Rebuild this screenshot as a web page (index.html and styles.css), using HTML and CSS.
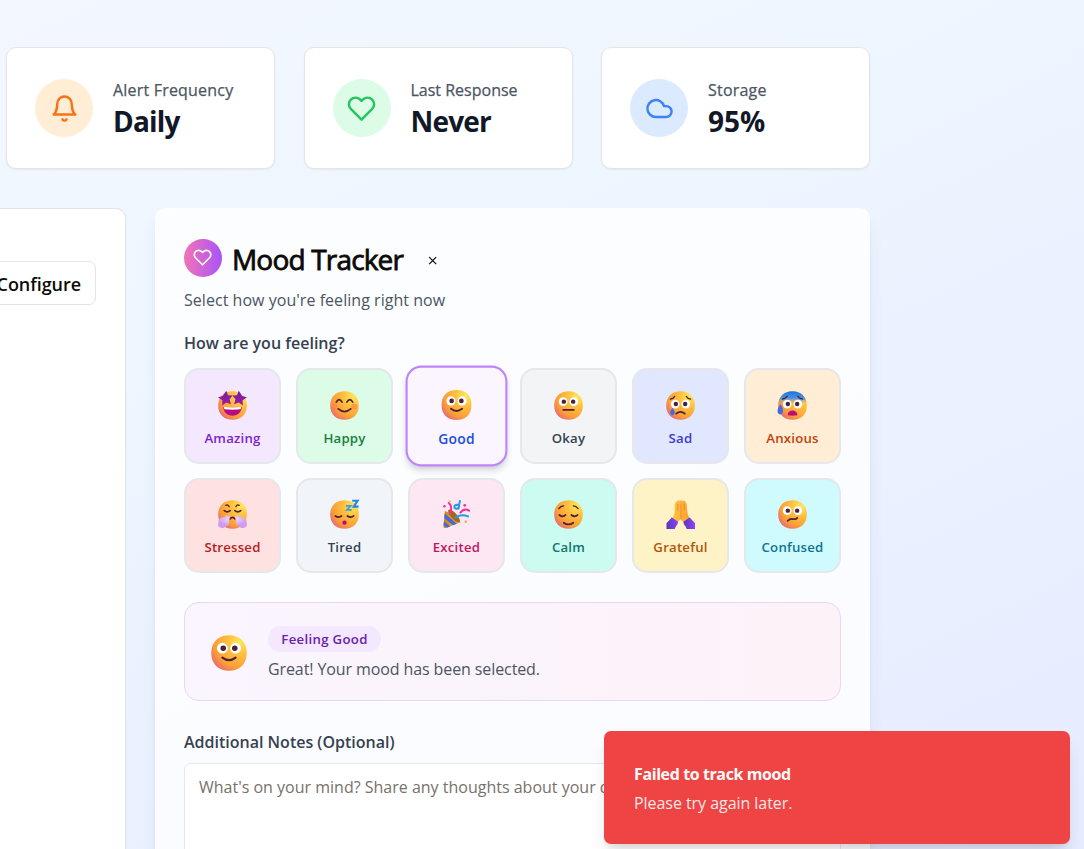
FILE: index.html
```html
<!DOCTYPE html>
<html lang="en">
<head>
<meta charset="utf-8">
<title>Mood Tracker</title>
<link rel="stylesheet" href="styles.css">
</head>
<body>
<svg class="defs" width="0" height="0" aria-hidden="true">
  <defs>
    <radialGradient id="skin" cx="24" cy="6" r="28" gradientUnits="userSpaceOnUse">
      <stop offset="0" stop-color="#ffe75c"/><stop offset=".35" stop-color="#ffc23f"/><stop offset=".75" stop-color="#fc9f36"/><stop offset="1" stop-color="#e76d6c"/>
    </radialGradient>
    <linearGradient id="star" x2="0" y2="1"><stop stop-color="#6924ad"/><stop offset="1" stop-color="#a6169f"/></linearGradient>
    <linearGradient id="fear" x2="0" y2="1"><stop stop-color="#1673e0"/><stop offset=".55" stop-color="#4d90e6"/><stop offset="1" stop-color="#c5b4a0" stop-opacity="0"/></linearGradient>
    <radialGradient id="steam" cx=".5" cy=".3"><stop stop-color="#f4e5ff"/><stop offset="1" stop-color="#cf9cf0"/></radialGradient>
    <linearGradient id="sleeve"><stop stop-color="#5b36b8"/><stop offset="1" stop-color="#8a43fa"/></linearGradient>
    <linearGradient id="hand"><stop stop-color="#ffc93f"/><stop offset="1" stop-color="#fc9c34"/></linearGradient>
    <linearGradient id="cone"><stop stop-color="#c98122"/><stop offset="1" stop-color="#f0b43b"/></linearGradient>
    <symbol id="face" viewBox="0 0 30 30"><path d="M15 .2C24 .2 29.800 6 29.800 15S24 29.800 15 29.800 .2 24 .2 15 6 .2 15 .2Z" fill="url(#skin)"/></symbol>
    <symbol id="eyes" viewBox="0 0 30 30"><circle cx="9.500" cy="11" r="4.500" fill="#fff"/><circle cx="20.500" cy="11" r="4.500" fill="#fff"/><circle cx="10.200" cy="11" r="2.300" fill="#4b2038"/><circle cx="19.800" cy="11" r="2.300" fill="#4b2038"/></symbol>
    <symbol id="good" viewBox="0 0 30 30"><use href="#face"/><use href="#eyes"/><path class="ink" d="M9.500 18.800q5.500 4.200 11 0"/></symbol>
    <symbol id="heart" viewBox="0 0 24 24"><path d="M20.840 4.610a5.500 5.500 0 0 0-7.780 0L12 5.670l-1.060-1.060a5.500 5.500 0 0 0-7.780 7.780L12 21.230l8.840-8.840a5.500 5.500 0 0 0 0-7.780Z"/></symbol>
  </defs>
</svg>
<main class="page">
  <section class="stats">
    <article class="stat">
      <span class="stat-icon orange"><svg viewBox="0 0 24 24"><path d="M6 8a6 6 0 0 1 12 0c0 7 3 9 3 9H3s3-2 3-9M10.300 21a1.940 1.940 0 0 0 3.400 0"/></svg></span>
      <div><p class="stat-label spaced">Alert Frequency</p><p class="stat-value">Daily</p></div>
    </article>
    <article class="stat">
      <span class="stat-icon green"><svg viewBox="0 0 24 24"><use href="#heart"/></svg></span>
      <div><p class="stat-label">Last Response</p><p class="stat-value">Never</p></div>
    </article>
    <article class="stat">
      <span class="stat-icon blue"><svg viewBox="0 0 24 24"><path d="M17.500 19H9a7 7 0 1 1 6.710-9h1.790a4.500 4.500 0 1 1 0 9Z"/></svg></span>
      <div><p class="stat-label spaced">Storage</p><p class="stat-value percent">95%</p></div>
    </article>
  </section>
  <section class="columns">
    <aside class="side"><button class="configure">Configure</button></aside>
    <article class="tracker">
      <header class="head">
        <span class="head-icon"><svg viewBox="0 0 24 24"><use href="#heart"/></svg></span>
        <h2 class="title">Mood Tracker</h2>
        <button class="close" aria-label="Close"><svg viewBox="0 0 10 10"><path d="M1.200 1.200l7 7M8.200 1.200l-7 7"/></svg></button>
      </header>
      <p class="subtitle">Select how you're feeling right now</p>
      <h3 class="field-label question">How are you feeling?</h3>
      <div class="moods">
        <button class="mood amazing"><svg viewBox="0 0 30 30"><use href="#face"/><path d="M5.500 16.500q9.500 1.500 19 0c0 5.500-4 9-9.500 9s-9.500-3.500-9.500-9Z" fill="#b80a84"/><path d="M6 16.400q9 1.500 18 0l-.6 2.600q-8.400 1-16.800 0Z" fill="#fff"/><path d="M8.500 -.2l1.900 4.500 4.800.3-3.300 4 1.500 5.200-4.800-2-4.200 3.200 .1-5.500L0 6.500l5-1.400Z" fill="url(#star)"/><path d="M21.500 -.2l-1.900 4.500-4.800.3 3.300 4-1.500 5.200 4.800-2 4.200 3.200-.1-5.500 4.500-3-5-1.400Z" fill="url(#star)"/></svg><span>Amazing</span></button>
        <button class="mood happy"><svg viewBox="0 0 30 30"><use href="#face"/><circle cx="5" cy="16" r="3" fill="#ff7858" opacity=".45"/><circle cx="25" cy="16" r="3" fill="#ff7858" opacity=".6"/><path class="ink" d="M6.500 11.500q3-5 6 0M17.500 11.500q3-5 6 0M8.500 18.500q6.500 5.500 13 0"/></svg><span>Happy</span></button>
        <button class="mood good selected"><svg viewBox="0 0 30 30"><use href="#good"/></svg><span>Good</span></button>
        <button class="mood okay"><svg viewBox="0 0 30 30"><use href="#face"/><use href="#eyes"/><path class="ink" d="M9.500 19.500h11"/></svg><span>Okay</span></button>
        <button class="mood sad"><svg viewBox="0 0 30 30"><use href="#face"/><g transform="translate(0 2.500)"><use href="#eyes" width="30" height="30"/></g><path class="ink thin" d="M4.500 8.500q3-.5 4.500-3M21 5.500q1.500 2.500 4.500 3"/><path class="ink" d="M10.500 23.500q4.500-4 9 0"/><path d="M6.700 17.500c1.700 2 2.300 3.200 2.300 4.800 0 3.600-4.600 3.600-4.600 0 0-1.600.6-2.800 2.300-4.800Z" fill="#3f6de0"/></svg><span>Sad</span></button>
        <button class="mood anxious"><svg viewBox="0 0 30 30"><use href="#face"/><path d="M15 .2C23.500 .2 29 5.500 29.700 13.500H.3C1 5.500 6.500 .2 15 .2Z" fill="url(#fear)"/><g transform="translate(0 2.500)"><use href="#eyes" width="30" height="30"/></g><path class="ink thin" d="M4.500 8.500q3-.5 5-3M20.500 5.500q2 2.500 5 3"/><path d="M10 25c0-6.500 10-6.500 10 0q-5 1-10 0Z" fill="#bd0c74"/><path d="M2.500 14c2 2 2.600 4.600 2.600 6.500 0 5-5.600 5-5.600.3 0-2.300 1-4.300 3-6.800Z" fill="#3f6de0"/></svg><span>Anxious</span></button>
        <button class="mood stressed"><svg viewBox="0 0 30 30"><use href="#face"/><path class="ink thin" d="M8 5.500q2.500-1.200 3.500 1.500M22 5.500q-2.500-1.200-3.500 1.500"/><path class="ink" d="M6.500 11q3 2.500 6 0M17.500 11q3 2.500 6 0M12.500 19.500q2.500-3 5 0"/><path d="M12 16.500c1 2-1 4-1 5.500 1.500 3-1 5-3 5.500-2 2.500-5 1.500-5.500 1-2.500-.5-3-3-2-5-.5-5 4-6 6-5.500 1-2 3.500-2.500 5.500-1.500ZM18 16.500c-1 2 1 4 1 5.500-1.500 3 1 5 3 5.500 2 2.500 5 1.500 5.500 1 2.500-.5 3-3 2-5 .5-5-4-6-6-5.500-1-2-3.500-2.500-5.500-1.500Z" fill="url(#steam)"/></svg><span>Stressed</span></button>
        <button class="mood tired"><svg viewBox="0 0 30 30"><use href="#face"/><path class="ink" d="M5.500 16.500q3.500 2.500 6.500 0M18 16.500q3.500 2.500 6.500 0"/><circle cx="15" cy="23.500" r="2.200" fill="#ba0879"/><path d="M23 .8h5.500l-4 6h5" fill="none" stroke="#2386e8" stroke-width="2.200"/><path d="M16.500 6h5l-4 4.200h5" fill="none" stroke="#36a3e0" stroke-width="1.800"/></svg><span>Tired</span></button>
        <button class="mood excited"><svg viewBox="0 0 30 30"><path d="M3 11.500L1.500 27q-.3 2.500 2 2l16-6Q14 15 3 11.500Z" fill="url(#cone)"/><path d="M2.800 14l-.4 4.500 9 7.500 4-1.500ZM2 22l-.3 4 3.500 2.700 3.300-1.200Z" fill="#4268dc"/><ellipse cx="12.500" cy="16.500" rx="3" ry="8.500" transform="rotate(-42 12.500 16.500)" fill="#a7661f"/><g fill="none" stroke-width="2" stroke-linecap="round"><path d="M7 3q4 3 1.500 11M19 13q4-5 9-2" stroke="#f23091"/><path d="M16 5q-4 0-3 3 2 2 4 0 2-2-1-3M17 9l1.500-8M14 18q6-4 13-1" stroke="#239ce4"/></g><circle cx="2.500" cy="6.500" r="1.300" fill="#f23091"/><circle cx="23.500" cy="5.500" r="1.400" fill="#f23091"/><circle cx="24.500" cy="22.500" r="1.200" fill="#e89d37"/><circle cx="8" cy="1.500" r="1" fill="#efb63b"/></svg><span>Excited</span></button>
        <button class="mood calm"><svg viewBox="0 0 30 30"><use href="#face"/><path class="ink thin" d="M5 9q2-3 5-3M20 6q3 0 5 3"/><path class="ink" d="M5.500 15.500q3.500 2.800 6.500 0M18 15.500q3.500 2.800 6.500 0M10 23.500q5 3.500 10 0"/></svg><span>Calm</span></button>
        <button class="mood grateful"><svg viewBox="0 0 30 30"><path d="M14 .5h3c3 0 4 2 4.500 5L22 12c.5 4 2 6.500 4 9l-5 4.500-6-5.500-6 5.500L4.500 21C7.500 18 9 15 9 11V5c.3-2.500 2-4.500 5-4.500Z" fill="url(#hand)"/><path d="M15.500 4v16M12.200 4v7M18.800 4v7" stroke="#e78132" stroke-width=".8"/><path d="M.5 24L6 18l6.500 4.500c0 3-2.500 4.500-3.500 7.500H.5Z" fill="url(#sleeve)"/><path d="M30 24l-5.500-6L18 22.500c0 3 2.500 4.500 3.500 7.500H30Z" fill="url(#sleeve)"/></svg><span>Grateful</span></button>
        <button class="mood confused"><svg viewBox="0 0 30 30"><use href="#face"/><use href="#eyes"/><path class="ink" d="M10 21.500q2.500-2.500 5.500-1.800t4.500-1.200"/></svg><span>Confused</span></button>
      </div>
      <div class="feedback">
        <svg class="feedback-face" viewBox="0 0 30 30"><use href="#good"/></svg>
        <div class="feedback-body"><span class="chip">Feeling Good</span><p class="feedback-text">Great! Your mood has been selected.</p></div>
      </div>
      <label class="field-label notes-label" for="notes">Additional Notes (Optional)</label>
      <textarea id="notes" class="notes" placeholder="What's on your mind? Share any thoughts about your day..."></textarea>
    </article>
  </section>
</main>
<div class="toast" role="alert">
  <p class="toast-title">Failed to track mood</p>
  <p class="toast-text">Please try again later.</p>
</div>
</body>
</html>
```

FILE: styles.css
```css
* { box-sizing: border-box; }
body {
  margin: 0;
  height: 849px;
  overflow: hidden;
  font-family: "Open Sans", "Noto Sans", sans-serif;
  font-size: 16px;
  color: #0c0a09;
  background: linear-gradient(155deg, #f3f7ff 0%, #eef6ff 32%, #e6ebff 100%);
}
p, h2, h3 { margin: 0; }
button { font-family: inherit; padding: 0; }
svg { display: block; }
.defs { position: absolute; }
.ink { fill: none; stroke: #4b2038; stroke-width: 1.8; stroke-linecap: round; }
.thin { stroke-width: 1.3; }
.page { width: 870px; padding-top: 47px; }

.stats { display: grid; grid-template-columns: repeat(3, 269px); gap: 28.500px; margin-left: 6px; }
.stat {
  display: flex; align-items: center; gap: 20px; height: 122px; padding-left: 28px;
  background: #fff; border: 1px solid #e7e5e4; border-radius: 10px;
  box-shadow: 0 1px 2px rgba(0, 0, 0, .06);
}
.stat-icon { width: 58px; height: 58px; border-radius: 50%; display: grid; place-items: center; }
.stat-icon svg { width: 29px; height: 29px; fill: none; stroke: currentColor; stroke-width: 2; stroke-linecap: round; stroke-linejoin: round; }
.orange { background: #ffedd5; color: #f97316; }
.green { background: #dcfce7; color: #22c55e; }
.blue { background: #dbeafe; color: #3b82f6; }
.stat-label { padding-top: 3px; font-size: 16px; line-height: 24px; color: #4b5563; -webkit-text-stroke: .25px; white-space: nowrap; }
.spaced { letter-spacing: .2px; }
.stat-value { font-size: 28px; line-height: 39px; font-weight: 700; letter-spacing: -.8px; color: #111827; }
.percent { letter-spacing: 0; }

.columns { display: flex; gap: 29px; margin-top: 39px; }
.side {
  width: 126px; height: 680px; padding: 52px 29px 0 0; display: flex; justify-content: flex-end; align-items: flex-start;
  background: #fff; border: 1px solid #e7e5e4; border-left: 0; border-radius: 0 10px 0 0;
  box-shadow: 0 1px 2px rgba(0, 0, 0, .06);
}
.configure {
  flex: none; width: 136px; height: 44px; padding: 2px 14px 0 0; text-align: right;
  font-size: 18px; font-weight: 600; letter-spacing: -.05px; color: #0c0a09;
  background: #fff; border: 1px solid #e7e5e4; border-radius: 7px;
}
.tracker {
  width: 715px; height: 680px; padding: 29px; border-radius: 10px;
  background: rgba(255, 255, 255, .8);
  box-shadow: 0 12px 18px -4px rgba(30, 60, 120, .1), 0 5px 7px -4px rgba(30, 60, 120, .1);
}
.head { display: flex; align-items: center; height: 43px; }
.head-icon { width: 38px; height: 38px; margin: -1px 10px 0 0; border-radius: 50%; display: grid; place-items: center; background: linear-gradient(90deg, #f472b6, #a855f7); }
.head-icon svg { width: 19px; height: 19px; margin: -1px 0 0 -1px; fill: none; stroke: #fff; stroke-width: 2; stroke-linejoin: round; }
.title { padding-top: 2px; font-size: 28px; line-height: 41px; font-weight: 400; letter-spacing: -.82px; -webkit-text-stroke: .8px; white-space: nowrap; width: 171px; }
.close { margin: 4px 0 0 25px; border: 0; background: none; }
.close svg { width: 10px; height: 10px; stroke: #0c0a09; stroke-width: 1.2; }
.subtitle { margin-top: 8px; font-size: 16px; line-height: 24px; letter-spacing: .04px; color: #4b5563; }
.field-label { display: block; font-size: 16px; line-height: 24px; font-weight: 600; color: #374151; }
.question { margin: 19px 0 13px; }
.moods { display: grid; grid-template-columns: repeat(6, 97px); grid-template-rows: 96px 95px; gap: 14px 15px; }
.mood {
  display: flex; flex-direction: column; align-items: center; justify-content: center; gap: 9px; padding-top: 6px;
  border: 2px solid #e5e7eb; border-radius: 15px; font-size: 13.200px; line-height: 19px; font-weight: 600; letter-spacing: .22px;
}
.mood svg { width: 29px; height: 29px; overflow: visible; }
.amazing { background: #f3e8ff; color: #7e22ce; }
.happy { background: #dcfce7; color: #15803d; }
.good { color: #1d4ed8; }
.okay { background: #f3f4f6; color: #374151; }
.sad { background: #e0e7ff; color: #4338ca; }
.anxious { background: #ffedd5; color: #c2410c; }
.stressed { background: #fee2e2; color: #b91c1c; }
.tired { background: #f1f5f9; color: #334155; }
.excited { background: #fce7f3; color: #be185d; }
.calm { background: #ccfbf1; color: #0f766e; }
.grateful { background: #fef3c7; color: #b45309; }
.confused { background: #cffafe; color: #0e7490; }
.selected { background: #faf5ff; border-color: #c084fc; transform: scale(1.05); box-shadow: 0 5px 7px -1px rgba(0, 0, 0, .12), 0 2px 4px -2px rgba(0, 0, 0, .1); }

.feedback {
  display: flex; align-items: center; gap: 20px; height: 99px; margin-top: 29px; padding: 0 26px;
  border: 1px solid #e9d5ff; border-radius: 15px; background: linear-gradient(90deg, #faf5ff, #fdf2f8);
}
.feedback-face { width: 36px; height: 36px; margin-top: 3px; }
.feedback-body { padding: 4px 0 0 1px; }
.chip { display: block; width: 113px; height: 26px; border-radius: 13px; background: #f3e8ff; text-align: center; font-size: 13.200px; line-height: 26px; font-weight: 600; letter-spacing: .32px; color: #6b21a8; }
.feedback-text { margin-top: 5px; font-size: 16px; line-height: 24px; letter-spacing: -.1px; color: #4b5563; }
.notes-label { margin-top: 29px; }
.notes {
  display: block; width: 657px; height: 120px; margin-top: 9px; padding: 11px 14px; resize: none; outline: 0;
  border: 1px solid #e5e7eb; border-radius: 7px; background: #fff; font: 16px/24px "Open Sans", "Noto Sans", sans-serif;
}
.notes::placeholder { color: #78716c; }
.toast {
  position: absolute; right: 14px; bottom: 5px; width: 466px; height: 113px; padding: 31px 30px;
  border-radius: 7px; background: #ef4444; color: #fafaf9;
  box-shadow: 0 12px 18px -4px rgba(0, 0, 0, .12), 0 5px 7px -4px rgba(0, 0, 0, .1);
}
.toast-title { font-size: 16px; line-height: 24px; font-weight: 700; letter-spacing: -.4px; }
.toast-text { margin-top: 5px; font-size: 16px; line-height: 24px; letter-spacing: -.05px; opacity: .9; }
```
